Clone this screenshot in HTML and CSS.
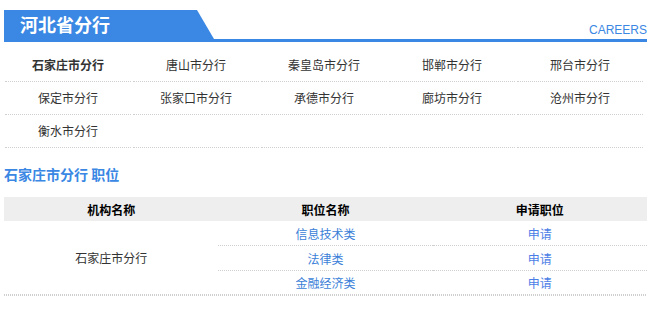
FILE: index.html
```html
<!DOCTYPE html>
<html lang="zh-CN">
<head>
  <meta charset="UTF-8" />
  <meta name="viewport" content="width=device-width, initial-scale=1.0"/>
  <title>河北省分行</title>
  <link rel="stylesheet" href="styles.css">
</head>
<body>
  <div class="wrap">
    <div class="header">
      <h1 class="tab">河北省分行</h1>
      <span class="careers">CAREERS</span>
    </div>

    <ul class="cities">
      <li class="current">石家庄市分行</li>
      <li>唐山市分行</li>
      <li>秦皇岛市分行</li>
      <li>邯郸市分行</li>
      <li>邢台市分行</li>
      <li>保定市分行</li>
      <li>张家口市分行</li>
      <li>承德市分行</li>
      <li>廊坊市分行</li>
      <li>沧州市分行</li>
      <li>衡水市分行</li>
      <li></li>
      <li></li>
      <li></li>
      <li></li>
    </ul>

    <h2 class="sub-title">石家庄市分行 职位</h2>

    <table class="jobs">
      <thead>
        <tr>
          <th>机构名称</th>
          <th>职位名称</th>
          <th>申请职位</th>
        </tr>
      </thead>
      <tbody>
        <tr>
          <td rowspan="3" class="org">石家庄市分行</td>
          <td><a href="#">信息技术类</a></td>
          <td><a href="#" class="apply">申请</a></td>
        </tr>
        <tr>
          <td><a href="#">法律类</a></td>
          <td><a href="#" class="apply">申请</a></td>
        </tr>
        <tr class="last">
          <td><a href="#">金融经济类</a></td>
          <td><a href="#" class="apply">申请</a></td>
        </tr>
      </tbody>
    </table>
  </div>
</body>
</html>
```

FILE: styles.css
```css
:root {
  --azul: #3a87e4;
  --texto: #333;
  --linea: #cfcfcf;
}

body {
  margin: 0;
  padding: 0;
  font-family: "Noto Sans CJK SC", "Liberation Sans", sans-serif;
  font-size: 12px;
  color: var(--texto);
  background: #fff;
}

.wrap {
  width: 643px;
  margin-left: 4px;
  padding-top: 10px;
}

.header {
  display: flex;
  justify-content: space-between;
  align-items: flex-end;
  border-bottom: 3px solid var(--azul);
}

.tab {
  margin: 0;
  width: 214px;
  height: 29px;
  padding-left: 16px;
  box-sizing: border-box;
  background: var(--azul);
  color: #fff;
  font-size: 18px;
  font-weight: bold;
  line-height: 29px;
  clip-path: polygon(0 0, 193px 0, 210px 100%, 0 100%);
}

.careers {
  font-family: "Liberation Sans", sans-serif;
  font-size: 12px;
  line-height: 14px;
  color: var(--azul);
  margin-bottom: 2px;
}

.cities {
  list-style: none;
  margin: 7px 0 0;
  padding: 0;
  width: 640px;
  display: grid;
  grid-template-columns: repeat(5, 1fr);
}

.cities li {
  height: 32px;
  line-height: 32px;
  text-align: center;
  border-bottom: 1px dotted var(--linea);
  margin: 0 1px;
}

.cities .current {
  font-weight: bold;
}

.sub-title {
  margin: 16px 0 13px;
  font-size: 14px;
  line-height: 20px;
  font-weight: bold;
  color: var(--azul);
}

.jobs {
  width: 643px;
  border-collapse: collapse;
  table-layout: fixed;
}

.jobs th {
  height: 24px;
  padding: 0;
  background: #eee;
  color: #000;
  font-weight: bold;
  font-size: 12px;
}

.jobs td {
  height: 24px;
  padding: 0;
  text-align: center;
  border-bottom: 1px dotted var(--linea);
}

/* linea inferior doble punteada */
.jobs td.org,
.jobs tr.last td {
  border-bottom: none;
  padding-bottom: 2px;
  background: repeating-linear-gradient(to right, var(--linea) 0 1px, transparent 1px 2px) bottom left / 100% 2px no-repeat;
}

.jobs tr.last td {
  height: 23px;
}

.jobs a {
  color: #3b7fd8;
  text-decoration: none;
}

.jobs a.apply {
  color: #4a7ee6;
}
```
